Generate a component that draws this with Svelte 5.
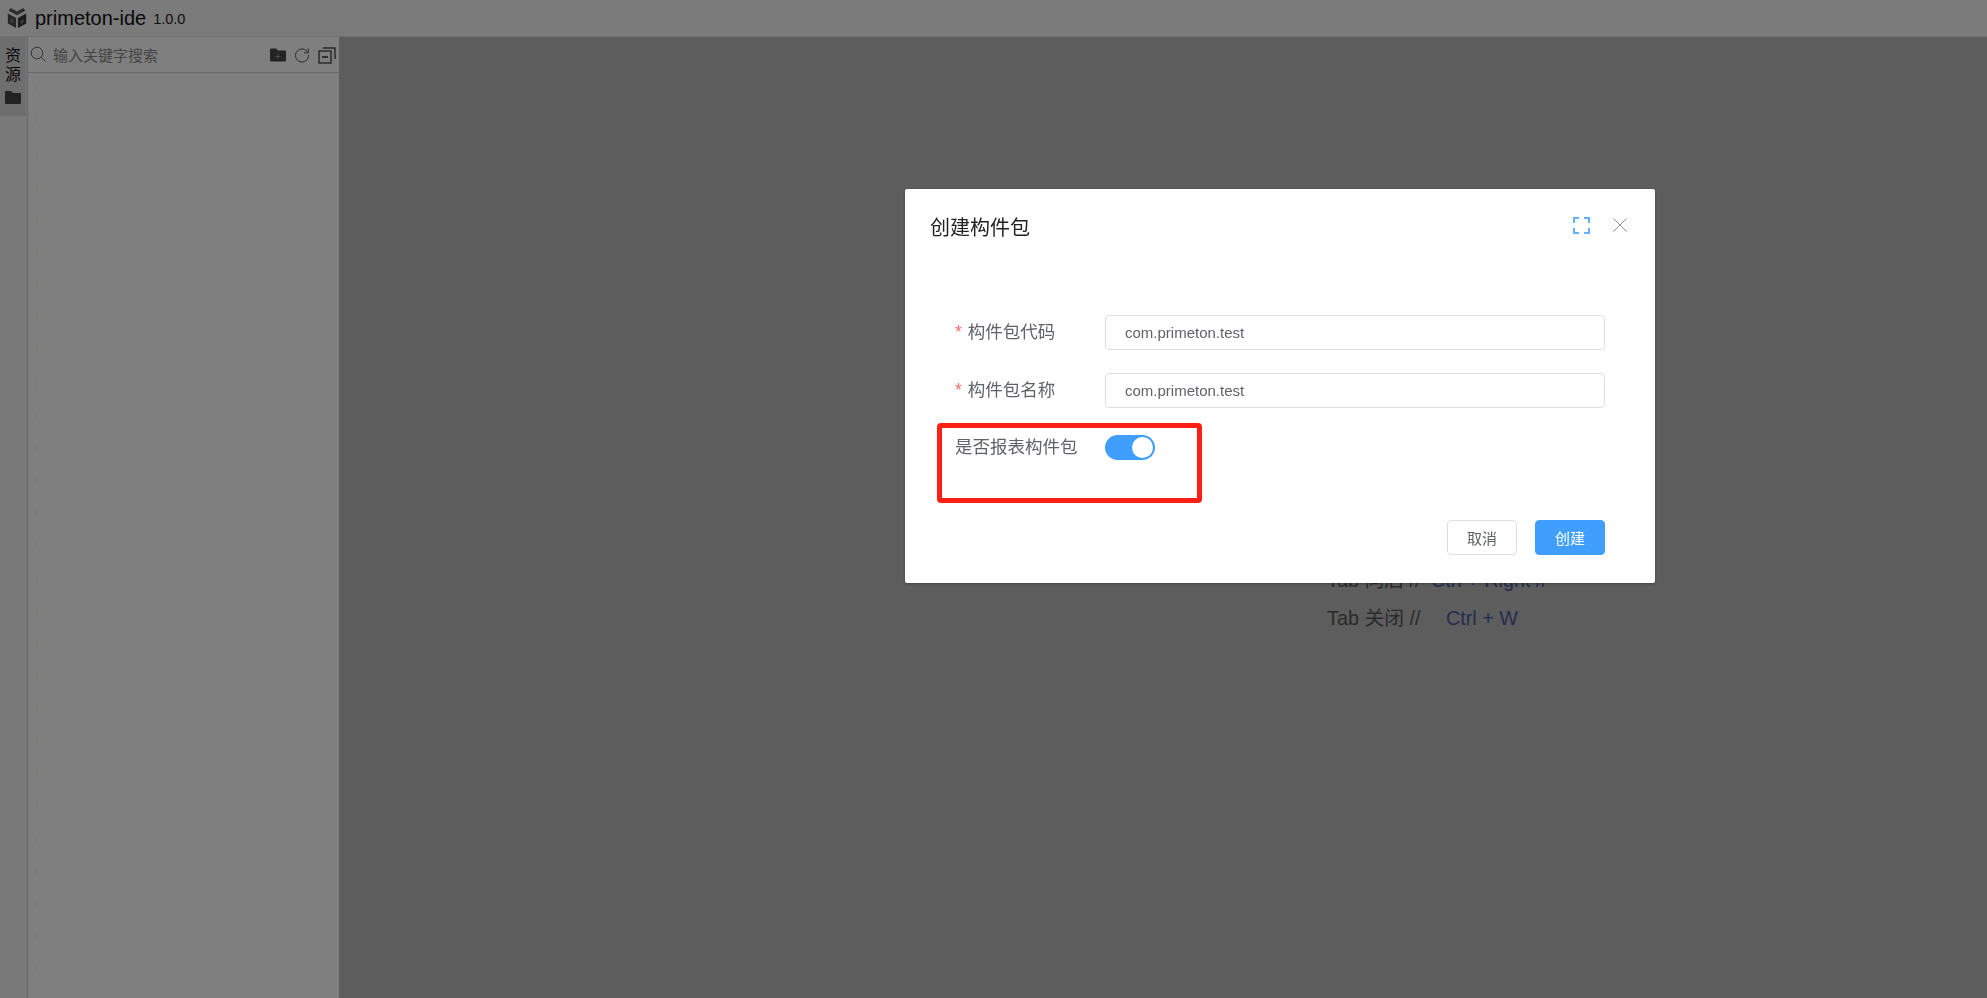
<script>
	let enabled = $state(true);
	const fields = [
		{ label: "构件包代码", value: "com.primeton.test" },
		{ label: "构件包名称", value: "com.primeton.test" },
	];
</script>

<div class="app">
	<header class="topbar">
		<svg class="logo" viewBox="0 0 24 24" width="22" height="22">
			<path d="M5 1l7 4 7-4 2 3-9 5-9-5z" fill="#5a5a5a" />
			<path d="M2 7l9 5v11l-9-5z" fill="#4c4c4c" />
			<path d="M22 7l-9 5v11l9-5z" fill="#383838" />
			<path d="M5 12l3 2v4l-3-2z" fill="#7a7a7a" />
			<path d="M16 15l3-2v4l-3 2z" fill="#7a7a7a" />
		</svg>
		<span class="name">primeton-ide</span>
		<span class="version">1.0.0</span>
	</header>
	<div class="body">
		<nav class="rail">
			<div class="tab">
				<span>资</span>
				<span>源</span>
				<svg viewBox="0 0 16 14" width="16" height="14">
					<path d="M0 2a1 1 0 0 1 1-1h5l2 2h7a1 1 0 0 1 1 1v9a1 1 0 0 1-1 1H1a1 1 0 0 1-1-1z" fill="#444" />
				</svg>
			</div>
		</nav>
		<aside class="panel">
			<div class="search">
				<svg class="lens" viewBox="0 0 16 16" width="16" height="16" fill="none" stroke="#6a6a6a" stroke-width="1">
					<circle cx="7" cy="7" r="5.800" />
					<path d="M11.200 11.200l4.300 4.300" />
				</svg>
				<span class="placeholder">输入关键字搜索</span>
				<span class="tools">
					<svg viewBox="0 0 16 14" width="16" height="14">
						<path d="M0 1.500a1 1 0 0 1 1-1h5l2 2h7a1 1 0 0 1 1 1v9a1 1 0 0 1-1 1H1a1 1 0 0 1-1-1z" fill="#484848" />
						<path d="M8 6v5M5.500 8.500h5" stroke="#999" stroke-width="1" />
					</svg>
					<svg viewBox="0 0 16 16" width="16" height="16" fill="none" stroke="#555" stroke-width="1">
						<path d="M13.800 5.500A6.500 6.500 0 1 0 14.500 8" />
						<path d="M14.300 1.500v4.300H10" />
					</svg>
					<svg viewBox="0 0 18 18" width="18" height="18" fill="none" stroke="#4c4c4c" stroke-width="1.400">
						<rect x="1" y="5" width="12" height="12" />
						<path d="M5 2h12v11" />
						<path d="M4 11h6" stroke-width="1.800" />
					</svg>
				</span>
			</div>
			<div class="tree"></div>
		</aside>
		<main class="main">
			<ul class="tips">
				<li>Tab 向后 // <b>Ctrl + Right //</b></li>
				<li>Tab 关闭 // <b>Ctrl + W</b></li>
			</ul>
		</main>
	</div>

	<div class="overlay">
		<div class="dialog">
			<div class="head">
				<span class="title">创建构件包</span>
				<svg class="full" viewBox="0 0 17 17" width="17" height="17" fill="none" stroke="#66b1ff" stroke-width="2">
					<path d="M1 6V1h5M11 1h5v5M16 11v5h-5M6 16H1v-5" />
				</svg>
				<svg class="close" viewBox="0 0 14 14" width="14" height="14" fill="none" stroke="#909399" stroke-width="1">
					<path d="M.500.500l13 13M13.500.500l-13 13" />
				</svg>
			</div>
			<form class="form">
				{#each fields as f}
					<div class="row">
						<span class="label"><i>*</i>{f.label}</span>
						<input class="input" value={f.value} />
					</div>
				{/each}
				<div class="row switch-row">
					<span class="label">是否报表构件包</span>
					<button type="button" class="switch" class:on={enabled} onclick={() => (enabled = !enabled)} aria-label="是否报表构件包"></button>
					<div class="mark"></div>
				</div>
			</form>
			<div class="foot">
				<button type="button" class="btn">取消</button>
				<button type="button" class="btn primary">创建</button>
			</div>
		</div>
	</div>
</div>

<style>
	:global(body) {
		margin: 0;
		font-family: "Liberation Sans", "Noto Sans CJK SC", sans-serif;
	}

	.app {
		height: 998px;
		display: flex;
		flex-direction: column;
		overflow: hidden;
		background: #fff;
	}

	.topbar {
		height: 36px;
		flex: none;
		display: flex;
		align-items: center;
		background: #f6f6f6;
		border-bottom: 1px solid #e4e4e4;
		padding-left: 6px;
		color: #111;
	}

	.logo {
		margin-right: 7px;
	}

	.name {
		font-size: 20px;
	}

	.version {
		font-size: 14.500px;
		margin-left: 7px;
		color: #222;
		margin-top: 2px;
	}

	.body {
		flex: 1;
		display: flex;
		min-height: 0;
	}

	.rail {
		width: 27px;
		flex: none;
		border-right: 1px solid #cfcfcf;
		background: #f2f2f2;
	}

	.tab {
		width: 26px;
		height: 79px;
		background: #dcdcdc;
		display: flex;
		flex-direction: column;
		align-items: center;
		font-size: 16px;
		line-height: 19px;
		padding-top: 9px;
		box-sizing: border-box;
		color: #111;
	}

	.tab svg {
		margin-top: 6px;
	}

	.panel {
		width: 311px;
		flex: none;
		background: #fff;
		display: flex;
		flex-direction: column;
	}

	.search {
		height: 36px;
		flex: none;
		display: flex;
		align-items: center;
		border-bottom: 1px solid #d2d2d2;
		padding-left: 2px;
		box-sizing: border-box;
	}

	.lens {
		margin-right: 7px;
		margin-top: -2px;
	}

	.placeholder {
		font-size: 15px;
		color: #8a8a8a;
		flex: 1;
	}

	.tools {
		display: flex;
		align-items: center;
		gap: 8px;
		padding-right: 3px;
	}

	.tree {
		flex: 1;
		background: linear-gradient(#f4f2de 8px, transparent 8px) 8px 12px / 1px 32.600px repeat-y;
	}

	.main {
		flex: 1;
		background: #bbb;
		padding: 524px 0 0 988px;
	}

	.tips {
		list-style: none;
		margin: 0;
		padding: 0;
		font-size: 19.800px;
		line-height: 38px;
		color: #555;
	}

	.tips b {
		font-weight: normal;
		color: #4a5a9c;
		margin-left: 20px;
	}

	.tips li:first-child b {
		margin-left: 5px;
	}

	.overlay {
		position: fixed;
		inset: 0;
		background: rgba(0, 0, 0, 0.5);
		padding: 189px 0 0 905px;
	}

	.dialog {
		width: 750px;
		height: 394px;
		background: #fff;
		border-radius: 2px;
		box-shadow: 0 1px 3px rgba(0, 0, 0, 0.3);
		display: flex;
		flex-direction: column;
	}

	.head {
		display: flex;
		align-items: center;
		padding: 27px 28px 0 25px;
		height: 25px;
	}

	.title {
		font-size: 20px;
		line-height: 25px;
		color: #222;
		flex: 1;
	}

	.full {
		margin-right: 23px;
		margin-top: -7px;
	}

	.close {
		margin-top: -7px;
	}

	.form {
		padding: 74px 50px 0 50px;
		display: flex;
		flex-direction: column;
		gap: 23px;
	}

	.row {
		display: flex;
		align-items: center;
		height: 35px;
		position: relative;
	}

	.label {
		width: 150px;
		flex: none;
		font-size: 17.500px;
		color: #606266;
		margin-top: -5px;
		white-space: nowrap;
	}

	.label i {
		color: #f56c6c;
		font-style: normal;
		margin-right: 6px;
	}

	.input {
		flex: 1;
		height: 35px;
		box-sizing: border-box;
		border: 1px solid #dcdfe6;
		border-radius: 4px;
		padding: 0 19px;
		font-size: 15px;
		font-family: inherit;
		color: #606266;
		outline: none;
	}

	.switch-row {
		align-items: flex-start;
		margin-top: 4px;
	}

	.switch-row .label {
		margin-top: -2px;
	}

	.switch {
		width: 50px;
		height: 25px;
		padding: 0;
		border: none;
		border-radius: 13px;
		background: #c0c4cc;
		position: relative;
	}

	.switch.on {
		background: #409eff;
	}

	.switch::after {
		content: "";
		position: absolute;
		top: 2px;
		left: 2px;
		width: 21px;
		height: 21px;
		border-radius: 50%;
		background: #fff;
	}

	.switch.on::after {
		left: 27px;
	}

	.mark {
		position: absolute;
		left: -18px;
		top: -12px;
		width: 265px;
		height: 80px;
		box-sizing: border-box;
		border: 5px solid #ff2015;
		border-radius: 4px;
	}

	.foot {
		display: flex;
		justify-content: flex-end;
		gap: 18px;
		padding: 50px 50px 0 0;
	}

	.btn {
		width: 70px;
		height: 35px;
		border: 1px solid #dcdfe6;
		border-radius: 4px;
		background: #fff;
		color: #606266;
		font-size: 15px;
		font-family: inherit;
		padding: 0;
	}

	.btn.primary {
		background: #409eff;
		border-color: #409eff;
		color: #fff;
	}
</style>
